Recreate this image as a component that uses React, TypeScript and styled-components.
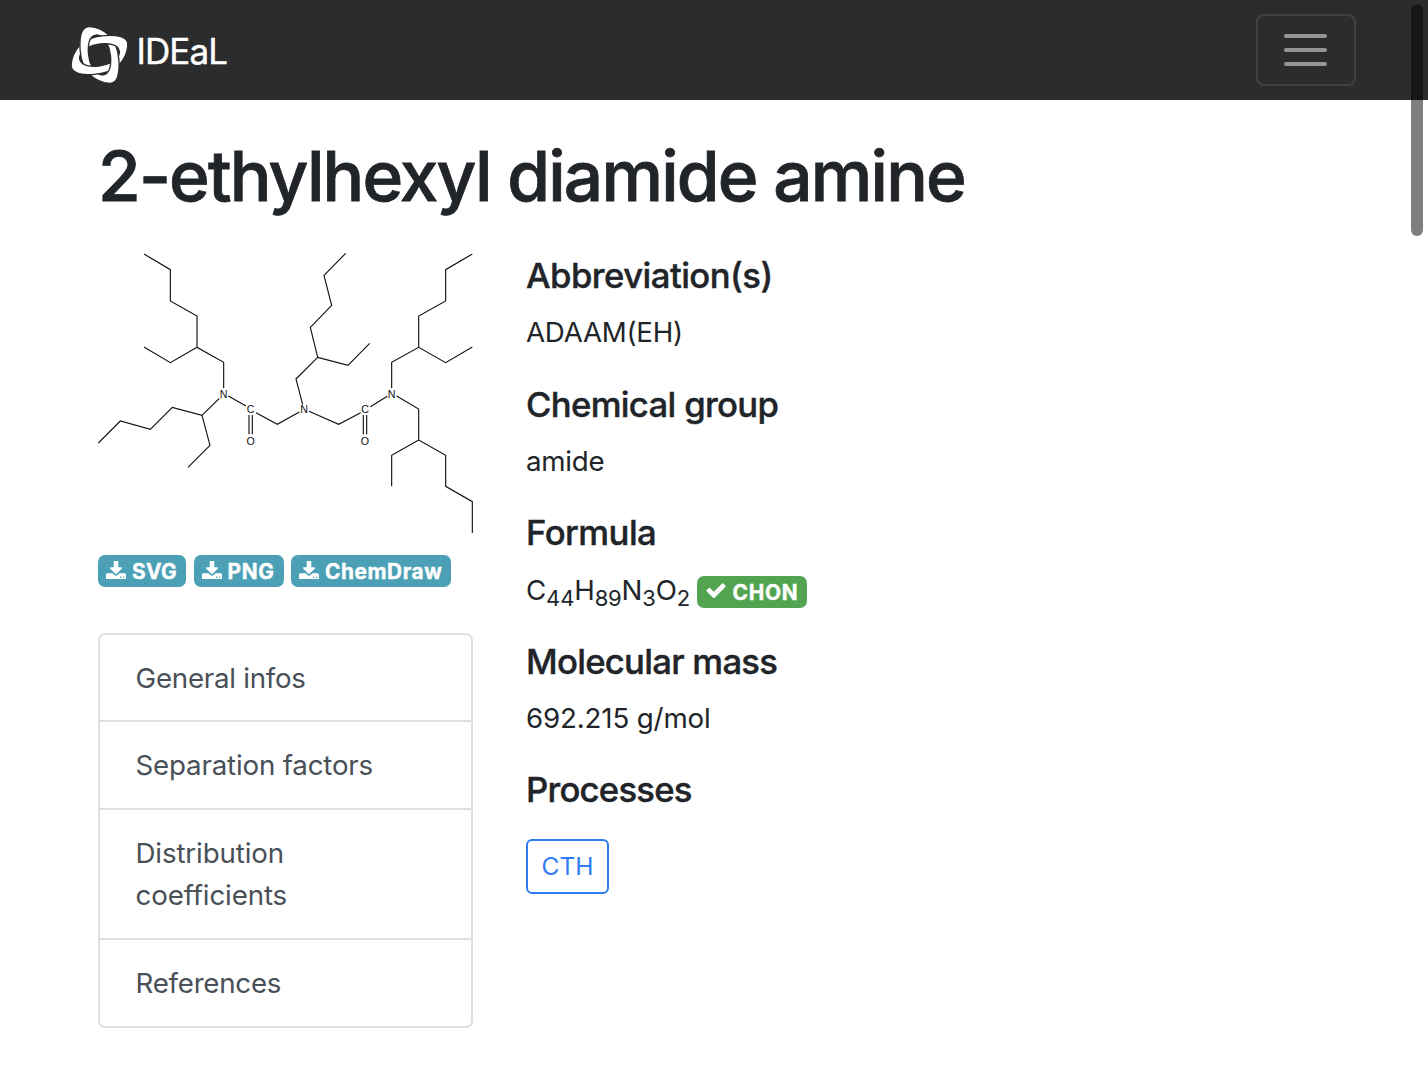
import React from "react";
import styled, { createGlobalStyle } from "styled-components";

const GlobalStyle = createGlobalStyle`
  * { box-sizing: border-box; }
  html { overflow: hidden; }
  body {
    margin: 0;
    background: #fff;
    color: #212529;
    font-family: Inter, "Liberation Sans", sans-serif;
    font-size: 27.7px;
    line-height: 42.86px;
  }
`;

const Navbar = styled.header`
  height: 100px;
  padding: 0 72px 0 71px;
  background: #2b2c2e;
  display: flex;
  align-items: center;
  justify-content: space-between;
`;

const Brand = styled.div`
  display: flex;
  align-items: center;
  gap: 8.5px;
  color: #fff;
  font-size: 35px;
  letter-spacing: -0.9px;
  -webkit-text-stroke: 0.4px #fff;
  svg { margin-top: 9px; }
  span { padding-top: 2px; }
`;

const Toggler = styled.button`
  width: 100px;
  height: 72px;
  padding: 0 1px 0 0;
  border: 2px solid #404143;
  border-radius: 8px;
  background: transparent;
  display: flex;
  flex-direction: column;
  align-items: center;
  justify-content: center;
  gap: 10px;
`;

const TogglerBar = styled.i`
  width: 43px;
  height: 4.3px;
  border-radius: 2px;
  background: #959597;
`;

const Scrollbar = styled.div`
  position: fixed;
  top: 4px;
  right: 5px;
  width: 12px;
  height: 232px;
  border-radius: 6px;
  background: rgba(0, 0, 0, 0.5);
`;

const Page = styled.main`
  padding: 33px 98px 0;
`;

const Title = styled.h1`
  margin: 0;
  height: 120px;
  font-size: 69.3px;
  line-height: 86px;
  font-weight: 500;
  letter-spacing: -1.82px;
  -webkit-text-stroke: 0.8px #212529;
  white-space: nowrap;
`;

const Columns = styled.div`
  display: grid;
  grid-template-columns: 375px 1fr;
  column-gap: 53px;
`;

const Structure = styled.svg`
  display: block;
  width: 375px;
  height: 281px;
  fill: none;
  stroke: #111;
  stroke-width: 3.4;
  text {
    fill: #111;
    stroke: none;
    font: 32px "Liberation Sans", Arial, sans-serif;
    text-anchor: middle;
  }
`;

const Downloads = styled.div`
  display: flex;
  gap: 7.5px;
  margin: 21px 0 45.5px;
`;

const Badge = styled.span<{ $color: string; $width: number; $spacing?: number }>`
  display: inline-flex;
  align-items: center;
  gap: 6px;
  width: ${(p) => p.$width}px;
  height: 32px;
  padding: 1px 0 0 8px;
  border-radius: 7px;
  background: ${(p) => p.$color};
  color: #fff;
  font-size: 20.8px;
  line-height: 21px;
  font-weight: 700;
  letter-spacing: ${(p) => p.$spacing ?? 0}px;
  -webkit-text-stroke: 0.4px #fff;
  white-space: nowrap;
  svg { flex: none; fill: #fff; margin-top: -3px; }
`;

const Nav = styled.nav`
  border: 2px solid #dfdfdf;
  border-radius: 7px;
`;

const NavItem = styled.a<{ $spacing: number }>`
  display: block;
  padding: 22px 35.5px 20.7px 35.5px;
  color: #495057;
  letter-spacing: ${(p) => p.$spacing}px;
  & + & { border-top: 2px solid #dfdfdf; }
`;

const Details = styled.section`
  padding-top: 1px;
`;

const Heading = styled.h5<{ $spacing: number }>`
  margin: 0 0 14.3px;
  font-size: 34.7px;
  line-height: 42.86px;
  font-weight: 500;
  letter-spacing: ${(p) => p.$spacing}px;
  -webkit-text-stroke: 0.4px #212529;
`;

const Value = styled.div<{ $spacing: number }>`
  display: flex;
  height: 42.86px;
  margin-bottom: 28.6px;
  letter-spacing: ${(p) => p.$spacing}px;
  white-space: nowrap;
`;

const Formula = styled.span`
  width: 170.5px;
  padding-top: 0.6px;
  sub {
    font-size: 22px;
    line-height: 0;
    vertical-align: -5.5px;
  }
`;

const ChonSlot = styled.span`
  display: flex;
  padding-top: 7.6px;
`;

const ProcessLink = styled.a`
  display: flex;
  align-items: center;
  justify-content: center;
  width: 83px;
  height: 55px;
  margin-top: 28px;
  border: 2px solid #2f7cf6;
  border-radius: 6px;
  color: #2f7cf6;
  font-size: 24.5px;
  letter-spacing: 0;
`;

const ring =
  "M85 -30C86 -56 52 -61 14 -58C-18 -56 -42 -46 -60 -28C-76 -10 -84 10 -85 30C-86 56 -52 61 -14 58C18 56 42 46 60 28C76 10 84 -10 85 -30ZM60 -8C58 -34 26 -35 2 -33C-26 -30 -56 -18 -60 8C-58 34 -26 35 -2 33C26 30 56 18 60 -8Z";

function Logo() {
  return (
    <svg
      width="57"
      height="58"
      viewBox="-85.5 -87 171 174"
      fill="#fff"
      fillRule="evenodd"
      stroke="#2b2c2e"
      strokeWidth="4"
    >
      <defs>
        <clipPath id="over">
          <path d="M0 0L-102 24V-102H-18ZM0 0L102 -24V102H18Z" />
        </clipPath>
      </defs>
      <path d={ring} transform="rotate(-90)" />
      <path d={ring} />
      <g clipPath="url(#over)">
        <path d={ring} transform="rotate(-90)" />
      </g>
    </svg>
  );
}

function DownloadIcon() {
  return (
    <svg width="20" height="18.5" viewBox="0 0 1664 1536">
      <path d="M1280 1344q0-26-19-45t-45-19-45 19-19 45 19 45 45 19 45-19 19-45zm256 0q0-26-19-45t-45-19-45 19-19 45 19 45 45 19 45-19 19-45zm128-224v320q0 40-28 68t-68 28H96q-40 0-68-28t-28-68v-320q0-40 28-68t68-28h465l135 136q58 56 136 56t136-56l136-136h464q40 0 68 28t28 68zm-325-569q17 41-14 70l-448 448q-18 19-45 19t-45-19L339 621q-31-29-14-70 17-39 59-39h256V64q0-26 19-45t45-19h256q26 0 45 19t19 45v448h256q42 0 59 39z" />
    </svg>
  );
}

function CheckIcon() {
  return (
    <svg width="22" height="15" viewBox="0 310 1783 1212">
      <path d="M1671 566q0 40-28 68l-724 724-136 136q-28 28-68 28t-68-28l-136-136-362-362q-28-28-28-68t28-68l136-136q28-28 68-28t68 28l294 295 656-657q28-28 68-28t68 28l136 136q28 28 28 68z" />
    </svg>
  );
}

const bonds = [
  "M162 42L241 89V183L321 228V322L401 367V444",
  "M162 321L241 368L321 322",
  "M25 609L91 543L181 568L247 502L336 526L388 475",
  "M336 526L360 616L294 682",
  "M415 468L468 498M498 518L562 553L628 516",
  "M477 525V583M487 525V583",
  "M767 40L702 106L725 196L661 262L683 352L618 417L638 494",
  "M683 352L774 376L839 310",
  "M657 514L746 553L812 518M841 500L892 469",
  "M820 525V583M830 525V583",
  "M905 444V367L986 322L1067 368L1147 321",
  "M986 322V228L1067 183V89L1147 42",
  "M920 468L986 507V600L1067 646V739L1147 785V879",
  "M986 600L905 646V739",
];

const atoms: [string, number, number][] = [
  ["N", 401, 475],
  ["C", 482, 520],
  ["O", 482, 614],
  ["N", 642, 520],
  ["C", 825, 520],
  ["O", 825, 614],
  ["N", 905, 475],
];

const files = [
  { label: "SVG", width: 88, spacing: 0.4 },
  { label: "PNG", width: 90, spacing: 0.7 },
  { label: "ChemDraw", width: 160, spacing: 0.6 },
];

const sections = [
  { label: "General infos", spacing: -0.25 },
  { label: "Separation factors", spacing: -0.18 },
  { label: "Distribution coefficients", spacing: -0.13 },
  { label: "References", spacing: -0.25 },
];

export default function App() {
  return (
    <>
      <GlobalStyle />
      <Navbar>
        <Brand>
          <Logo />
          <span>IDEaL</span>
        </Brand>
        <Toggler aria-label="Toggle navigation">
          <TogglerBar />
          <TogglerBar />
          <TogglerBar />
        </Toggler>
      </Navbar>
      <Page>
        <Title>2-ethylhexyl diamide amine</Title>
        <Columns>
          <aside>
            <Structure viewBox="24 39 1125 843">
              {bonds.map((d) => (
                <path key={d} d={d} />
              ))}
              {atoms.map(([symbol, x, y]) => (
                <text key={`${x}-${y}`} x={x} y={y}>
                  {symbol}
                </text>
              ))}
            </Structure>
            <Downloads>
              {files.map((f) => (
                <Badge key={f.label} $color="#4ba0b5" $width={f.width} $spacing={f.spacing}>
                  <DownloadIcon />
                  {f.label}
                </Badge>
              ))}
            </Downloads>
            <Nav>
              {sections.map((s) => (
                <NavItem key={s.label} $spacing={s.spacing}>
                  {s.label}
                </NavItem>
              ))}
            </Nav>
          </aside>
          <Details>
            <Heading $spacing={-0.55}>Abbreviation(s)</Heading>
            <Value $spacing={-0.25}>ADAAM(EH)</Value>
            <Heading $spacing={-0.68}>Chemical group</Heading>
            <Value $spacing={-0.25}>amide</Value>
            <Heading $spacing={-0.55}>Formula</Heading>
            <Value $spacing={-0.15}>
              <Formula>
                C<sub>44</sub>H<sub>89</sub>N<sub>3</sub>O<sub>2</sub>
              </Formula>
              <ChonSlot>
                <Badge $color="#53a451" $width={110} $spacing={0.8}>
                  <CheckIcon />
                  CHON
                </Badge>
              </ChonSlot>
            </Value>
            <Heading $spacing={-0.74}>Molecular mass</Heading>
            <Value $spacing={-0.15}>692.215 g/mol</Value>
            <Heading $spacing={-0.78}>Processes</Heading>
            <ProcessLink>CTH</ProcessLink>
          </Details>
        </Columns>
      </Page>
      <Scrollbar />
    </>
  );
}
